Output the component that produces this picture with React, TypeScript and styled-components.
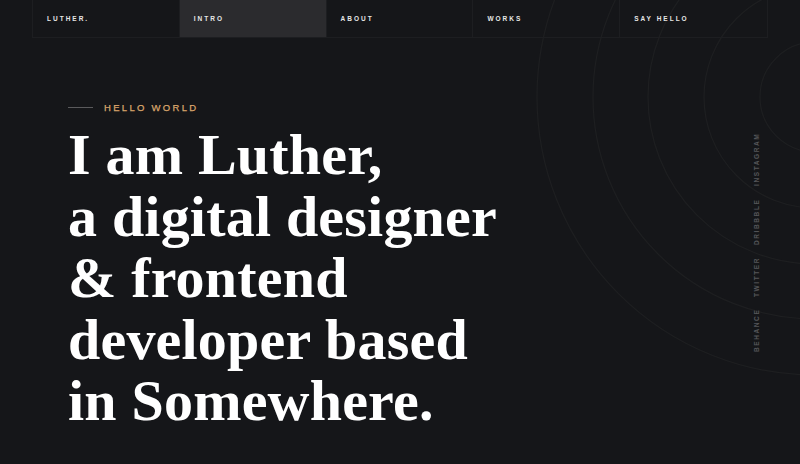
import styled, { createGlobalStyle } from "styled-components";

const GlobalStyle = createGlobalStyle`
  html, body {
    margin: 0;
    padding: 0;
    background: #151619;
  }
  * {
    box-sizing: border-box;
  }
`;

const Page = styled.div`
  position: relative;
  width: 800px;
  height: 464px;
  overflow: hidden;
  background: #151619;
  font-family: "Liberation Sans", Arial, sans-serif;
`;

const Rings = styled.svg`
  position: absolute;
  left: 0;
  top: 0;
  pointer-events: none;
`;

const Nav = styled.nav`
  position: relative;
  display: grid;
  grid-template-columns: repeat(5, 1fr);
  margin: 0 32px;
  height: 38px;
  border: 1px solid #1d1e21;
  border-top: none;
`;

const NavItem = styled.a<{ $active?: boolean }>`
  display: flex;
  align-items: center;
  padding-left: 14px;
  background: ${(p) => (p.$active ? "#2b2b2e" : "transparent")};
  border-right: 1px solid #1d1e21;
  color: #e6e6e6;
  font-size: 6.5px;
  font-weight: 700;
  letter-spacing: 2px;
  text-transform: uppercase;
  text-decoration: none;

  &:last-child {
    border-right: none;
  }
`;

const Hero = styled.section`
  position: relative;
  display: flex;
  justify-content: space-between;
  padding: 64px 40px 0 68px;
`;

const Intro = styled.div`
  display: flex;
  flex-direction: column;
`;

const Kicker = styled.div`
  display: flex;
  align-items: center;
  gap: 11px;
  color: #dba66c;
  font-size: 9.5px;
  letter-spacing: 2.3px;
  text-transform: uppercase;
  -webkit-text-stroke: 0.25px #dba66c;

  &::before {
    content: "";
    width: 25px;
    height: 1px;
    background: #5a5a5c;
  }
`;

const Headline = styled.h1`
  margin: 11px 0 0;
  color: #ffffff;
  font-family: "Liberation Serif", "Times New Roman", serif;
  font-size: 58px;
  font-weight: 700;
  line-height: 61.5px;
  letter-spacing: 0.2px;
`;

const Social = styled.ul`
  display: flex;
  gap: 12px;
  margin: 40px 0 0;
  padding: 0;
  height: 210px;
  list-style: none;
  writing-mode: vertical-rl;
  transform: rotate(180deg);
`;

const SocialLink = styled.li`
  color: #55565a;
  font-size: 6.5px;
  font-weight: 700;
  letter-spacing: 1.6px;
  text-transform: uppercase;
`;

const navItems = ["Luther.", "Intro", "About", "Works", "Say Hello"];
const socials = ["Behance", "Twitter", "Dribbble", "Instagram"];
const ringRadii = [55, 111, 167, 222, 278];

export default function App() {
  return (
    <Page>
      <GlobalStyle />
      <Rings width={800} height={464} viewBox="0 0 800 464">
        {ringRadii.map((r) => (
          <circle key={r} cx={815} cy={97} r={r} fill="none" stroke="#1e1f21" strokeWidth={1.2} />
        ))}
      </Rings>
      <Nav>
        {navItems.map((item) => (
          <NavItem key={item} href="#" $active={item === "Intro"}>
            {item}
          </NavItem>
        ))}
      </Nav>
      <Hero>
        <Intro>
          <Kicker>Hello World</Kicker>
          <Headline>
            I am Luther,
            <br />a digital designer
            <br />&amp; frontend
            <br />developer based
            <br />in Somewhere.
          </Headline>
        </Intro>
        <Social>
          {socials.map((s) => (
            <SocialLink key={s}>{s}</SocialLink>
          ))}
        </Social>
      </Hero>
    </Page>
  );
}
